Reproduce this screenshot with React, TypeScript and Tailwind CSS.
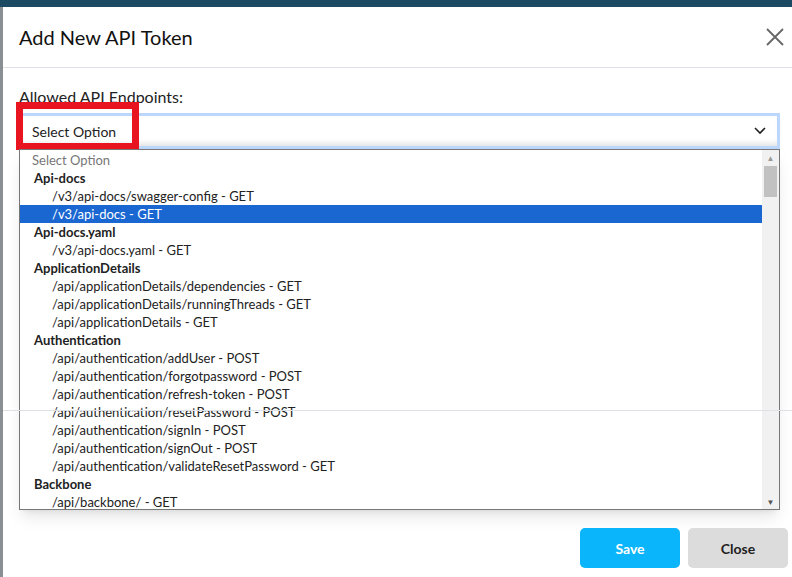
import React from "react";

const rows: [string, number][] = [
  ["Select Option", 0],
  ["Api-docs", 1],
  ["/v3/api-docs/swagger-config - GET", 2],
  ["/v3/api-docs - GET", 3],
  ["Api-docs.yaml", 1],
  ["/v3/api-docs.yaml - GET", 2],
  ["ApplicationDetails", 1],
  ["/api/applicationDetails/dependencies - GET", 2],
  ["/api/applicationDetails/runningThreads - GET", 2],
  ["/api/applicationDetails - GET", 2],
  ["Authentication", 1],
  ["/api/authentication/addUser - POST", 2],
  ["/api/authentication/forgotpassword - POST", 2],
  ["/api/authentication/refresh-token - POST", 2],
  ["/api/authentication/resetPassword - POST", 2],
  ["/api/authentication/signIn - POST", 2],
  ["/api/authentication/signOut - POST", 2],
  ["/api/authentication/validateResetPassword - GET", 2],
  ["Backbone", 1],
  ["/api/backbone/ - GET", 2],
];

export default function App() {
  return (
    <div className="w-[792px] h-[577px] bg-[#8a8f94] relative overflow-hidden" style={{ fontFamily: "Lato, 'Liberation Sans', sans-serif" }}>
      <div className="h-[7px] bg-[#1d4a63]" />
      <div className="absolute left-[3px] top-[7px] right-0 bottom-0 bg-white">
        <div className="h-[61px] border-b border-[#dee2e6] flex items-center justify-between pl-[16px] pr-[6px]">
          <div className="text-[20px] text-[#111]">Add New API Token</div>
          <svg width="22" height="22" viewBox="0 0 22 22" stroke="#666" strokeWidth="1.8"><path d="M3 3L19 19M19 3L3 19" /></svg>
        </div>
        <div className="pl-[16px] pr-[12px] pt-[19px]">
          <div className="text-[16px] text-[#222] leading-[20px]">Allowed API Endpoints:</div>
          <div className="relative mt-[6px]">
            <div className="h-[36px] border-[3px] border-[#bcd7fb] bg-white flex items-center justify-between pl-[10px] pr-[10px]" style={{ boxShadow: "inset 0 -6px 6px -4px #ddd" }}>
              <span className="text-[14px] text-[#222]">Select Option</span>
              <svg width="14" height="10" viewBox="0 0 14 10" fill="none" stroke="#222" strokeWidth="1.6"><path d="M2 2l5 5 5-5" /></svg>
            </div>
            <div className="absolute left-[-3px] top-[-11px] w-[123px] h-[48px] border-[7px] border-[#e8141f]" />
            <div className="absolute left-0 top-[36px] w-[761px] h-[361px] border border-[#777] bg-white flex shadow-lg">
              <div className="flex-1 pt-[1px]">
                {rows.map(([t, k], i) => (
                  <div key={i} className={`h-[18px] leading-[18px] text-[13px] ${k === 0 ? "text-[#777] pl-[12px]" : k === 1 ? "font-bold text-[#222] pl-[14px]" : k === 3 ? "bg-[#1a67d2] text-white pl-[32px]" : "text-[#222] pl-[32px]"}`}>{t}</div>
                ))}
              </div>
              <div className="w-[17px] bg-[#f1f1f1] flex flex-col items-center">
                <div className="text-[8px] text-[#999] mt-[2px]">▲</div>
                <div className="w-[13px] h-[31px] bg-[#c1c1c1] mt-[2px]" />
                <div className="flex-1" />
                <div className="text-[8px] text-[#555] mb-[1px]">▼</div>
              </div>
            </div>
          </div>
        </div>
        <div className="absolute left-0 right-0 top-[403px] border-t border-[#dee2e6]" />
        <div className="absolute right-[4px] top-[521px] flex gap-[8px]">
          <button className="w-[100px] h-[40px] rounded-[5px] bg-[#0bb5fb] text-white font-bold text-[14px]">Save</button>
          <button className="w-[100px] h-[40px] rounded-[5px] bg-[#dcdcdc] text-[#222] font-bold text-[14px]">Close</button>
        </div>
      </div>
    </div>
  );
}
